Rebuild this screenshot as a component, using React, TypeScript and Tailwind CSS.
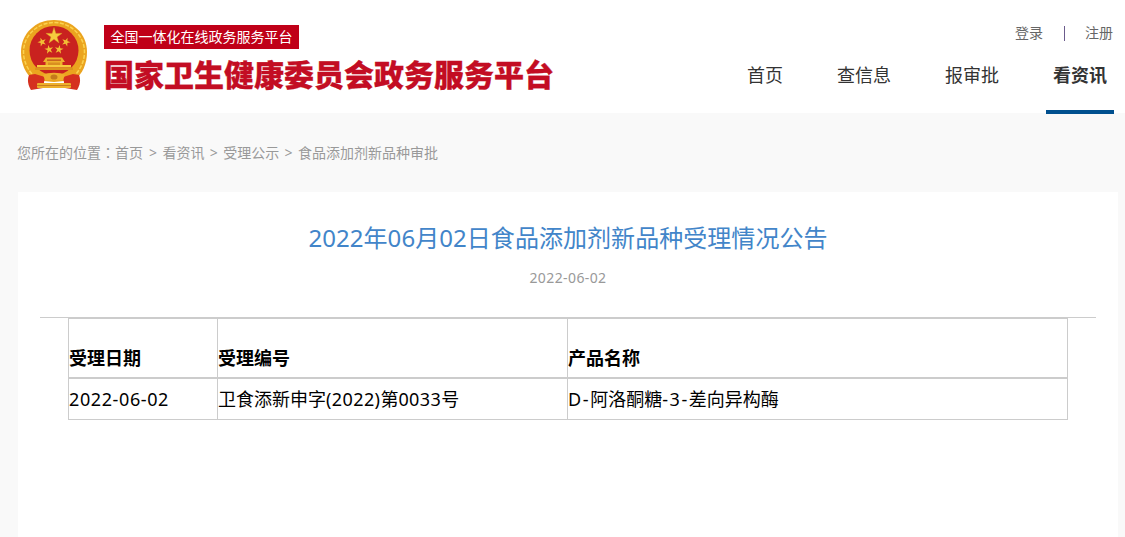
import React from 'react';

const cjk = '"Noto Sans", "Noto Sans CJK SC", sans-serif';

const navItems = [
  { label: '首页', active: false },
  { label: '查信息', active: false },
  { label: '报审批', active: false },
  { label: '看资讯', active: true },
];

const crumbs = ['看资讯', '受理公示', '食品添加剂新品种审批'];

const star = (cx: number, cy: number, r: number, rot = 0) => {
  const pts: string[] = [];
  for (let i = 0; i < 10; i++) {
    const rad = i % 2 === 0 ? r : r * 0.38;
    const a = ((-90 + rot + i * 36) * Math.PI) / 180;
    pts.push(`${(cx + rad * Math.cos(a)).toFixed(2)},${(cy + rad * Math.sin(a)).toFixed(2)}`);
  }
  return pts.join(' ');
};

// national emblem, drawn small so the blur of the original roughly holds
const Emblem = () => (
  <svg width="68" height="72" viewBox="0 0 68 72" className="shrink-0">
    {/* wreath */}
    <path d="M14 60 C5 54 1 43 1 32 C1 13 16 0 34 0 C52 0 67 13 67 32 C67 43 63 54 54 60 L34 62 Z" fill="#eba41f" />
    <path d="M12 54 C6 47 3.5 39 3.5 32 C3.5 15 18 2.5 34 2.5 C50 2.5 64.5 15 64.5 32 C64.5 39 62 47 56 54" fill="none" stroke="#fbd350" strokeWidth="1.5" strokeDasharray="4 1.5" />
    {/* red disc */}
    <circle cx="34" cy="30.5" r="24.5" fill="#c9221f" />
    <polygon points={star(34, 16, 8.5)} fill="#f6cb3e" stroke="#d99a22" strokeWidth="0.4" />
    <polygon points={star(22, 22, 4.6, -20)} fill="#f2bf35" />
    <polygon points={star(46, 22, 4.6, 20)} fill="#f2bf35" />
    <polygon points={star(29, 29.5, 4.6, -10)} fill="#f2bf35" />
    <polygon points={star(39, 29.5, 4.6, 10)} fill="#f2bf35" />
    {/* gate */}
    <path d="M23 42 L26 37.5 H42 L45 42 H42.5 V45.5 H25.5 V42 Z" fill="#eeb02c" />
    <rect x="27" y="39.5" width="14" height="1.2" fill="#b9481b" />
    <rect x="28" y="42.5" width="12" height="3" fill="#d98f20" />
    <rect x="17" y="45" width="34" height="2.5" fill="#f6cb3e" />
    <rect x="15" y="47.5" width="38" height="2.5" fill="#dc951c" />
    {/* ribbons sit over the foot of the wreath */}
    <path d="M9 55 C7 60 8 65 11 70 L23 68 L25 57 L15 54 Z" fill="#d5301f" />
    <path d="M59 55 C61 60 60 65 57 70 L45 68 L43 57 L53 54 Z" fill="#d5301f" />
    {/* knot and lower scroll */}
    <path d="M23 55 C27 52 41 52 45 55 L43 60 H25 Z" fill="#eeb02c" />
    <ellipse cx="34" cy="57" rx="3.5" ry="2.6" fill="#c47a1c" />
    <rect x="17" y="63" width="34" height="5" rx="1" fill="#edb02c" />
    <rect x="17" y="65" width="34" height="0.9" fill="#c47a1c" />
  </svg>
);

export default function App() {
  return (
    <div className="h-[537px] overflow-hidden bg-[#f9f9f9]" style={{ fontFamily: cjk }}>
      <header className="flex h-[113px] justify-between bg-white pl-[20px] pr-[11px]">
        <div className="flex">
          <div className="pt-[20px]">
            <Emblem />
          </div>
          <div className="ml-[16px] pt-[25px]">
            <div className="flex h-[24px] w-[195px] items-center justify-center bg-[#c00018] text-[14px] leading-none text-white">
              全国一体化在线政务服务平台
            </div>
            <div className="mt-[8px] text-[30px] font-black leading-[36px] whitespace-nowrap text-[#c30d23] [-webkit-text-stroke:0.3px_#c30d23]">
              国家卫生健康委员会政务服务平台
            </div>
          </div>
        </div>
        <div className="flex flex-col items-end">
          <div className="mr-[1px] flex items-center pt-[24px] text-[14px] leading-[18px] text-[#666]">
            <span>登录</span>
            <span className="ml-[21px] mr-[20px] h-[15px] w-px bg-[#6b5b8c]" />
            <span>注册</span>
          </div>
          <nav className="mt-[11px] flex gap-[40px]">
            {navItems.map((item) => (
              <div
                key={item.label}
                className={`h-[61px] border-b-4 px-[7px] pt-[9px] text-[18px] leading-[26px] text-[#333] ${
                  item.active ? 'border-[#00508f] font-bold' : 'border-transparent'
                }`}
              >
                {item.label}
              </div>
            ))}
          </nav>
        </div>
      </header>

      <div className="flex h-[79px] items-center gap-[5.4px] pl-[17px] text-[14px] text-[#999]">
        <span className="mr-[0.6px]">
          您所在的位置<span className="font-['Noto_Sans_CJK_TC']">：</span>首页
        </span>
        {crumbs.map((c) => (
          <React.Fragment key={c}>
            <span>&gt;</span>
            <span>{c}</span>
          </React.Fragment>
        ))}
      </div>

      <main className="ml-[18px] mr-[7px] bg-white px-[22px]">
        <h1 className="pt-[28px] text-center text-[24px] font-normal leading-[36px] tracking-[0.05px] text-[#4285c9]">
          2022年06月02日食品添加剂新品种受理情况公告
        </h1>
        <p className="mt-[12px] text-center text-[14px] leading-[20px] tracking-[0.4px] text-[#999]">2022-06-02</p>
        <div className="mt-[29px] border-t border-[#ccc]" />
        <div className="px-[28px]">
          <table className="w-[1000px] border-collapse text-[18px] text-black">
            <tbody>
              <tr className="h-[59px] align-bottom font-bold">
                <td className="w-[149px] border border-[#ccc] pb-[6px] leading-[26px]">受理日期</td>
                <td className="w-[350px] border border-[#ccc] pb-[6px] leading-[26px]">受理编号</td>
                <td className="border border-[#ccc] pb-[6px] leading-[26px]">产品名称</td>
              </tr>
              <tr className="h-[42px] border-t-2 border-[#ccc]">
                <td className="border border-[#ccc] leading-[26px] tracking-[0.6px]">2022-06-02</td>
                <td className="border border-[#ccc] leading-[26px]">
                  卫食添新申字<span className="tracking-[0.4px]">(2022)</span>第<span className="tracking-[0.4px]">0033</span>号
                </td>
                <td className="border border-[#ccc] leading-[26px]">
                  <span className="tracking-[1.6px]">D-</span>阿洛酮糖<span className="tracking-[1.6px]">-3-</span>差向异构酶
                </td>
              </tr>
            </tbody>
          </table>
        </div>
        <div className="h-[200px]" />
      </main>
    </div>
  );
}
